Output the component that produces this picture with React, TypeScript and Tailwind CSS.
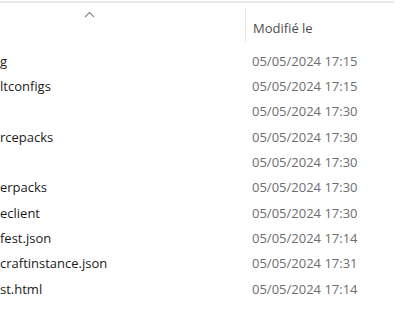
import React from "react";

const rows = [
    { name: "g", date: "05/05/2024 17:15" },
    { name: "ltconfigs", date: "05/05/2024 17:15" },
    { name: "", date: "05/05/2024 17:30" },
    { name: "rcepacks", date: "05/05/2024 17:30" },
    { name: "", date: "05/05/2024 17:30" },
    { name: "erpacks", date: "05/05/2024 17:30" },
    { name: "eclient", date: "05/05/2024 17:30" },
    { name: "fest.json", date: "05/05/2024 17:14" },
    { name: "craftinstance.json", date: "05/05/2024 17:31" },
    { name: "st.html", date: "05/05/2024 17:14" },
];

function App() {
    return (
        <div
            className="h-[330px] w-[400px] overflow-hidden bg-white text-[13px]"
            style={{ fontFamily: '"Open Sans", "Noto Sans", sans-serif' }}
        >
            <div className="h-[1px]" />
            <div className="mr-[6px] border-t-2 border-[#e8e8e8]" />
            {/* header */}
            <div className="flex h-[46px]">
                <div className="flex w-[245px] justify-center pt-[8px] pl-[3px]">
                    <svg width="11" height="7" viewBox="0 0 11 7" className="ml-[-70px]">
                        <path d="M1 6 L5.5 1.5 L10 6" fill="none" stroke="#8a8a8a" strokeWidth="1.1" />
                    </svg>
                </div>
                <div className="flex flex-1 items-start">
                    <div className="mt-[5px] h-[34px] w-px bg-[#e5e5e5]" />
                    <div className="pl-[7px] pt-[16px] text-[#4d4d4d]">Modifié le</div>
                </div>
            </div>
            {/* rows */}
            <div className="flex flex-col">
                {rows.map((r, i) => (
                    <div key={i} className="flex h-[25.3px] items-center">
                        <div className="w-[246px] whitespace-nowrap text-[#1b1b1b]">{r.name}</div>
                        <div className="pl-[6px] text-[#6e6e6e]">{r.date}</div>
                    </div>
                ))}
            </div>
        </div>
    );
}

export default App;
